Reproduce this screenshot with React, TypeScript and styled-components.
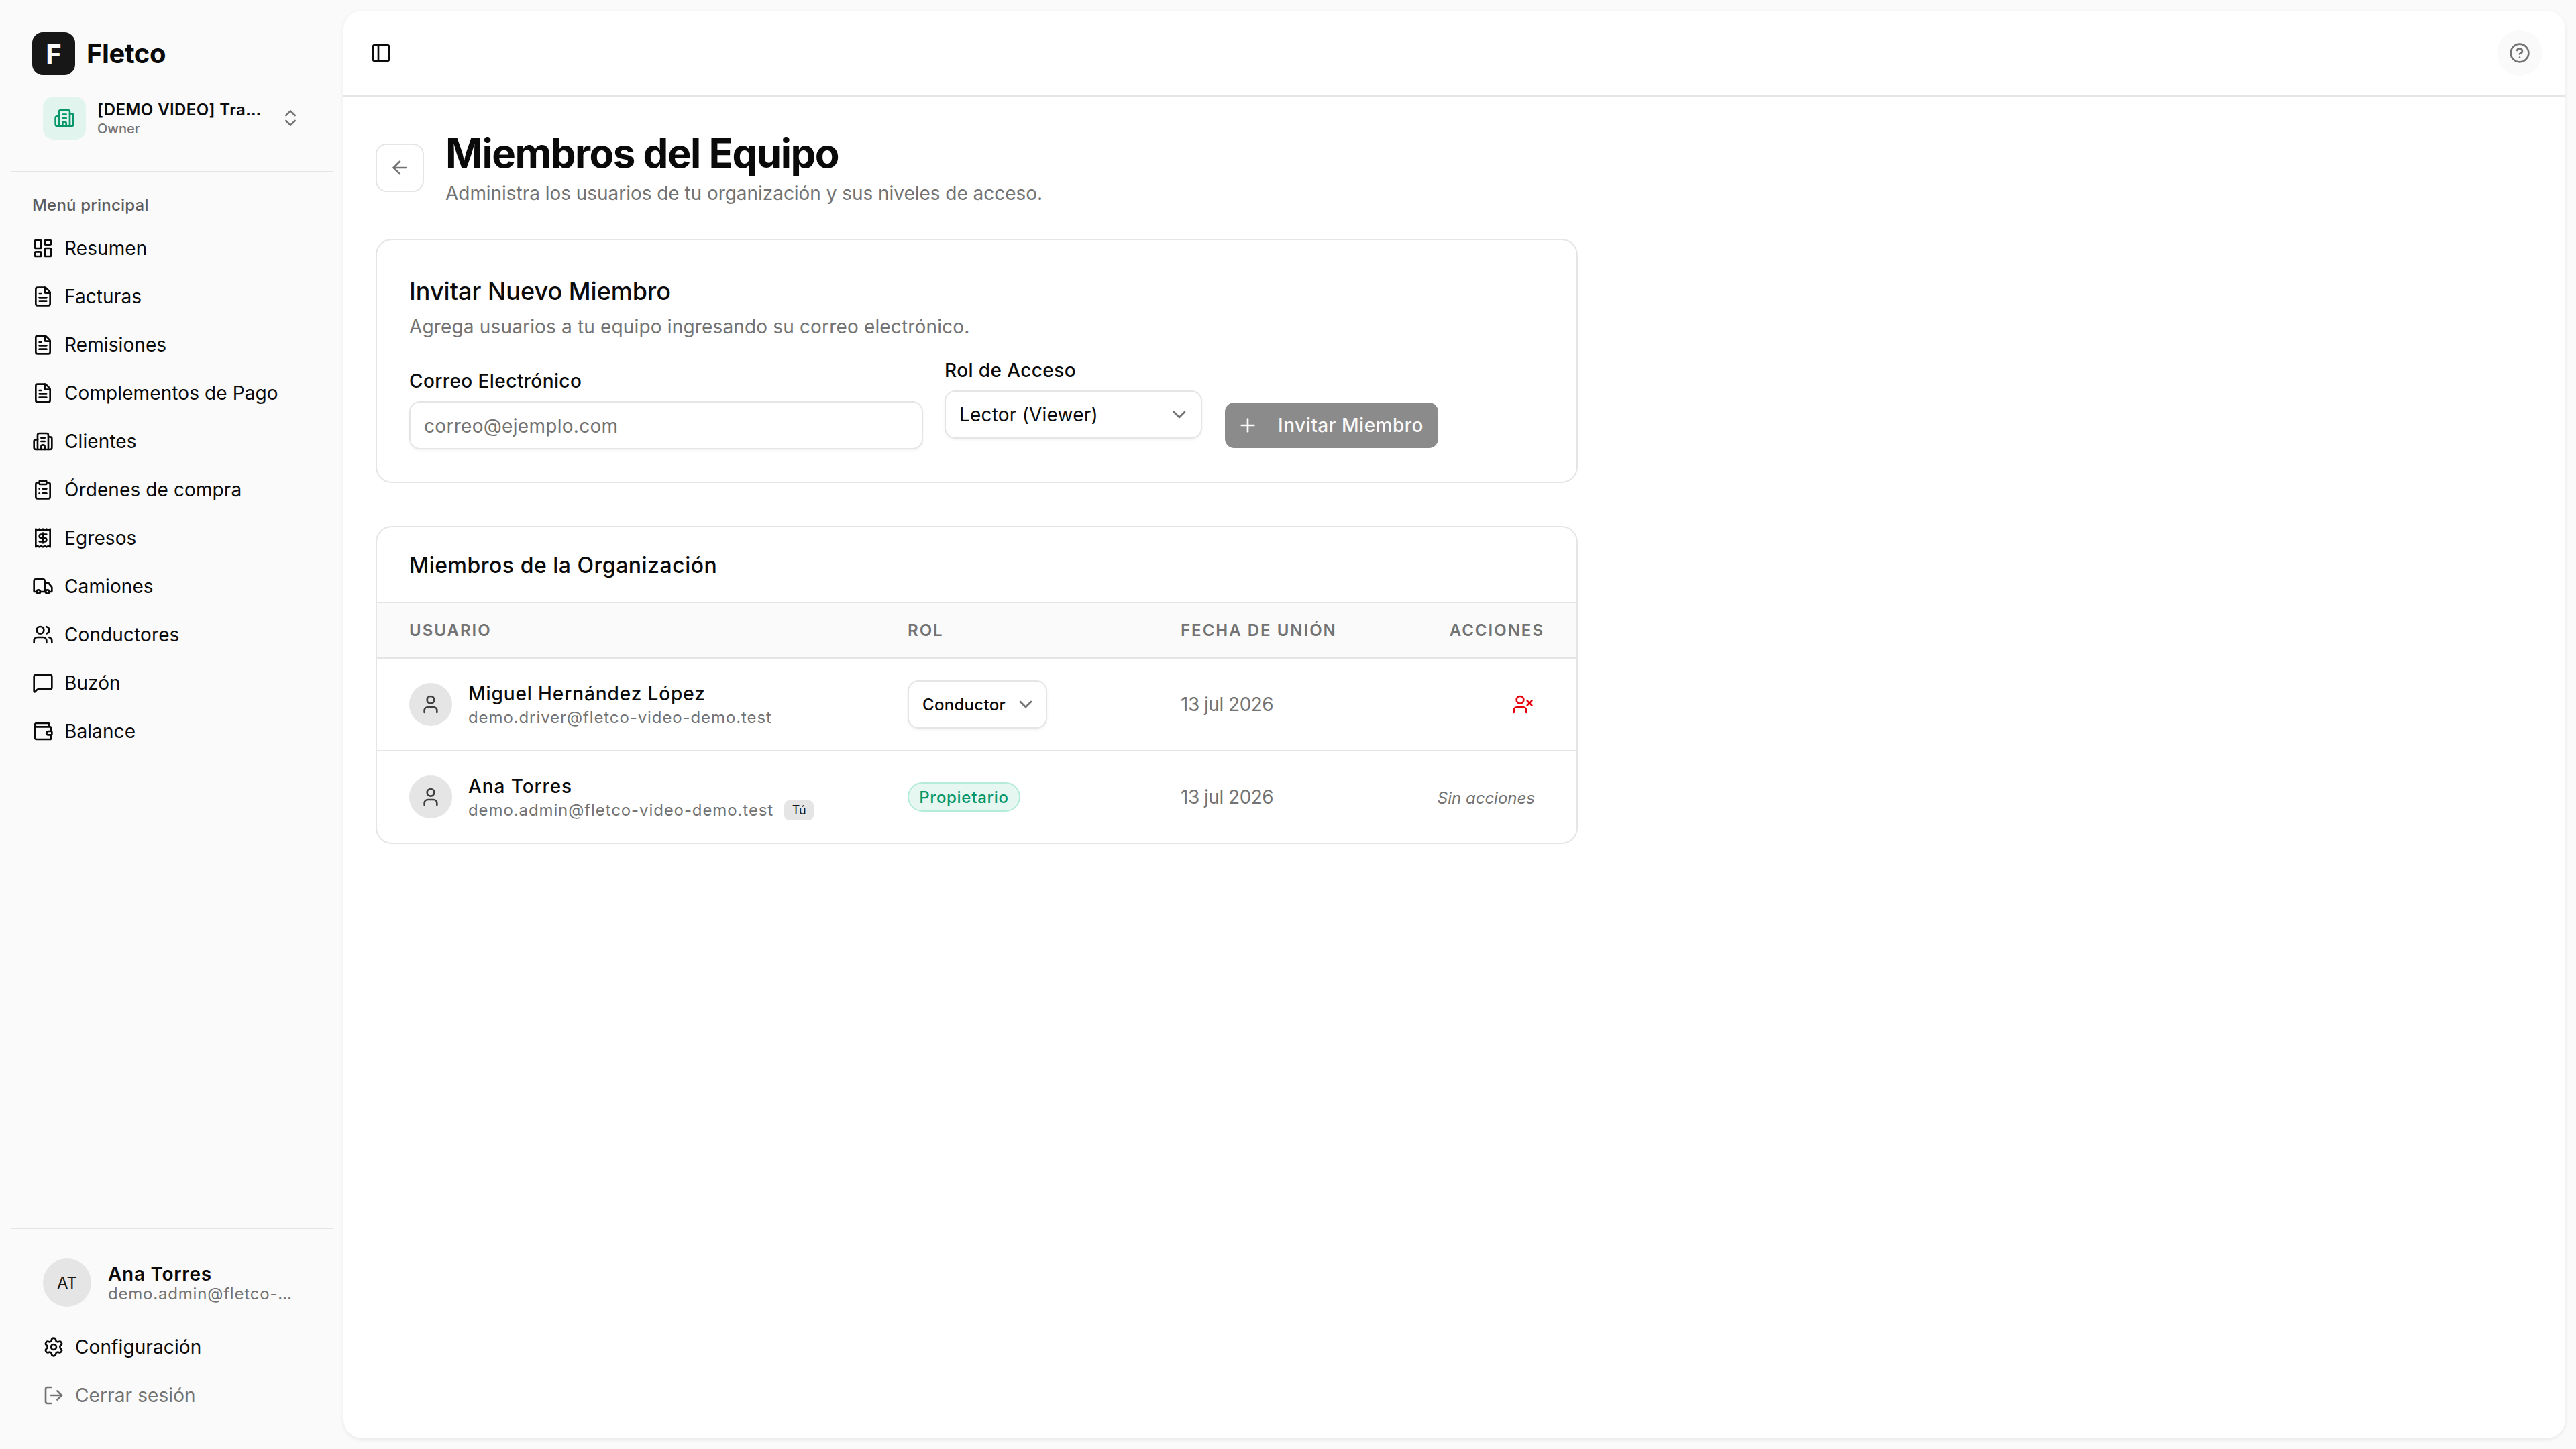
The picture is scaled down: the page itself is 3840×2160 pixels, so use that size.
import React from 'react';
import styled, { createGlobalStyle } from 'styled-components';
import {
  ArrowLeft,
  Building2,
  ChevronDown,
  ChevronsUpDown,
  CircleHelp,
  ClipboardList,
  FileText,
  LayoutDashboard,
  LogOut,
  MessageSquare,
  PanelLeft,
  Plus,
  Receipt,
  Settings,
  Truck,
  User,
  UserX,
  Users,
  Wallet,
} from 'lucide-react';

const GlobalStyle = createGlobalStyle`
  * {
    box-sizing: border-box;
  }
  html,
  body {
    margin: 0;
    height: 100%;
  }
  body {
    font-family: Inter, 'Liberation Sans', sans-serif;
    color: #0a0a0a;
    background: #fafafa;
  }
  svg {
    flex-shrink: 0;
  }
`;

const Shell = styled.div`
  display: flex;
  width: 3840px;
  height: 2160px;
  background: #fafafa;
`;

const Sidebar = styled.aside`
  width: 512px;
  flex-shrink: 0;
  display: flex;
  flex-direction: column;
`;

const Brand = styled.div`
  display: flex;
  align-items: center;
  gap: 17px;
  margin: 48px 0 0 48px;
`;

const BrandMark = styled.div`
  width: 64px;
  height: 64px;
  border-radius: 16px;
  background: #171717;
  color: #fafafa;
  display: flex;
  align-items: center;
  justify-content: center;
  font-size: 40px;
  font-weight: 700;
`;

const BrandName = styled.span`
  font-size: 40px;
  line-height: 56px;
  font-weight: 700;
  letter-spacing: -0.4px;
`;

const OrgSwitcher = styled.div`
  display: flex;
  align-items: center;
  margin: 32px 0 0 64px;
  height: 64px;
`;

const OrgIcon = styled.div`
  width: 64px;
  height: 64px;
  border-radius: 16px;
  background: #e1f5ee;
  color: #059669;
  display: flex;
  align-items: center;
  justify-content: center;
`;

const OrgText = styled.div`
  width: 246px;
  margin: 0 26px 0 17px;
  min-width: 0;
`;

const OrgName = styled.div`
  font-size: 24px;
  line-height: 32px;
  font-weight: 600;
  letter-spacing: 0.4px;
  white-space: nowrap;
  overflow: hidden;
  text-overflow: ellipsis;
`;

const OrgRole = styled.div`
  font-size: 20px;
  line-height: 24px;
  font-weight: 500;
  color: #737373;
`;

const OrgChevron = styled(ChevronsUpDown)`
  color: #737373;
`;

const Divider = styled.div<{ $top: number }>`
  height: 2px;
  margin: ${(p) => p.$top}px 16px 0;
  background: #e5e5e5;
`;

const NavGroup = styled.nav`
  padding: 33px 32px 0;
  display: flex;
  flex-direction: column;
`;

const NavLabel = styled.div`
  font-size: 24px;
  line-height: 32px;
  font-weight: 500;
  letter-spacing: 0.2px;
  color: #5c5c5c;
  padding-left: 16px;
  margin-bottom: 16px;
`;

const NavList = styled.ul`
  list-style: none;
  margin: 0;
  padding: 0;
  display: flex;
  flex-direction: column;
  gap: 8px;
`;

const NavItem = styled.li<{ $muted?: boolean }>`
  height: 64px;
  padding: 0 16px;
  display: flex;
  align-items: center;
  gap: 16px;
  font-size: 28px;
  letter-spacing: 0.1px;
  color: ${(p) => (p.$muted ? '#737373' : '#0a0a0a')};
`;

const SidebarFooter = styled.div`
  margin-top: auto;
`;

const UserBlock = styled.div`
  padding: 44px 48px 48px;
  display: flex;
  flex-direction: column;
  gap: 8px;
`;

const UserRow = styled.div`
  display: flex;
  align-items: center;
  gap: 25px;
  padding-left: 16px;
  margin-bottom: 20px;
`;

const UserInitials = styled.div`
  width: 72px;
  height: 72px;
  border-radius: 50%;
  background: #e5e5e5;
  color: #171717;
  display: flex;
  align-items: center;
  justify-content: center;
  font-size: 24px;
`;

const UserText = styled.div`
  width: 284px;
`;

const UserName = styled.div`
  font-size: 28px;
  line-height: 34px;
  font-weight: 600;
  letter-spacing: 0.7px;
`;

const UserEmail = styled.div`
  font-size: 24px;
  line-height: 26px;
  letter-spacing: 0.8px;
  color: #737373;
  white-space: nowrap;
  overflow: hidden;
  text-overflow: ellipsis;
`;

const Main = styled.main`
  flex: 1;
  margin: 16px 16px 16px 0;
  background: #fff;
  border-radius: 28px;
  box-shadow: 0 2px 6px rgba(0, 0, 0, 0.08);
  display: flex;
  flex-direction: column;
  min-width: 0;
`;

const TopBar = styled.header`
  height: 128px;
  flex-shrink: 0;
  border-bottom: 2px solid #e5e5e5;
  padding: 0 34px 0 40px;
  display: flex;
  align-items: center;
  justify-content: space-between;
`;

const HelpButton = styled.button`
  width: 68px;
  height: 68px;
  padding: 0;
  border: none;
  border-radius: 50%;
  background: #fafafa;
  color: #737373;
  display: flex;
  align-items: center;
  justify-content: center;
`;

const Content = styled.div`
  padding: 48px;
  display: flex;
  flex-direction: column;
`;

const PageHead = styled.div`
  display: flex;
  align-items: center;
  gap: 32px;
  margin-bottom: 48px;
`;

const BackButton = styled.button`
  width: 72px;
  height: 72px;
  padding: 0;
  background: #fff;
  border: 2px solid #e5e5e5;
  border-radius: 16px;
  color: #737373;
  display: flex;
  align-items: center;
  justify-content: center;
`;

const PageTitle = styled.h1`
  margin: 0;
  font-size: 60px;
  line-height: 72px;
  font-weight: 700;
  letter-spacing: -1.5px;
`;

const PageSubtitle = styled.p`
  margin: 4px 0 0;
  font-size: 28px;
  line-height: 40px;
  letter-spacing: -0.04px;
  color: #737373;
`;

const Card = styled.section`
  width: 1792px;
  background: #fff;
  border: 2px solid #e5e5e5;
  border-radius: 24px;
`;

const InviteCard = styled(Card)`
  padding: 48px;
  margin-bottom: 64px;
`;

const CardTitle = styled.h2`
  margin: 0;
  font-size: 36px;
  line-height: 56px;
  font-weight: 450;
`;

const CardDescription = styled.p`
  margin: 5px 0 0;
  font-size: 28px;
  line-height: 40px;
  letter-spacing: 0.16px;
  color: #737373;
`;

const InviteForm = styled.div`
  display: flex;
  align-items: flex-end;
  gap: 32px;
  margin-top: 25px;
`;

const Field = styled.div<{ $width: number; $lift?: number }>`
  width: ${(p) => p.$width}px;
  margin-bottom: ${(p) => p.$lift ?? 0}px;
  display: flex;
  flex-direction: column;
  gap: 10px;
`;

const FieldLabel = styled.label`
  font-size: 28px;
  line-height: 40px;
  font-weight: 450;
  letter-spacing: 0.4px;
`;

const TextInput = styled.input`
  height: 72px;
  width: 100%;
  padding: 2px 20px 0;
  border: 2px solid #e5e5e5;
  border-radius: 16px;
  background: #fff;
  box-shadow: 0 2px 4px rgba(0, 0, 0, 0.05);
  font: inherit;
  font-size: 28px;
  letter-spacing: 0.3px;
  outline: none;
  &::placeholder {
    color: #737373;
    opacity: 1;
  }
`;

const SelectBox = styled.div`
  height: 72px;
  padding: 0 20px;
  border: 2px solid #e5e5e5;
  border-radius: 16px;
  background: #fff;
  box-shadow: 0 2px 4px rgba(0, 0, 0, 0.05);
  display: flex;
  align-items: center;
  justify-content: space-between;
  font-size: 28px;
  letter-spacing: 0.2px;
  svg {
    color: #737373;
    margin-right: -4px;
  }
`;

const InviteButton = styled.button`
  width: 318px;
  height: 68px;
  margin: 0 0 2px 2px;
  padding: 0 18px;
  border: none;
  border-radius: 14px;
  background: #8b8b8b;
  color: #fafafa;
  font: inherit;
  font-size: 28px;
  font-weight: 500;
  letter-spacing: 0.5px;
  display: flex;
  align-items: center;
  gap: 29px;
`;

const CardHead = styled.div`
  height: 113px;
  padding: 37px 48px 0;
  border-bottom: 2px solid #e5e5e5;
`;

const MembersTitle = styled.h2`
  margin: 0;
  font-size: 32px;
  line-height: 40px;
  font-weight: 550;
  letter-spacing: 0.5px;
`;

const tableColumns = '743px 407px 1fr auto';

const TableHead = styled.div`
  height: 83px;
  padding: 0 48px;
  display: grid;
  grid-template-columns: ${tableColumns};
  align-items: center;
  background: #fafafa;
  border-bottom: 2px solid #e5e5e5;
  font-size: 24px;
  font-weight: 600;
  letter-spacing: 2px;
  color: #737373;
  text-transform: uppercase;
`;

const TableRow = styled.div`
  height: 138px;
  padding: 0 48px;
  display: grid;
  grid-template-columns: ${tableColumns};
  align-items: center;
  border-bottom: 2px solid #e5e5e5;
  &:last-child {
    border-bottom: none;
    height: 136px;
    border-radius: 0 0 22px 22px;
  }
`;

const Member = styled.div`
  display: flex;
  align-items: center;
  gap: 24px;
`;

const MemberAvatar = styled.div`
  width: 64px;
  height: 64px;
  border-radius: 50%;
  background: #e5e5e5;
  display: flex;
  align-items: center;
  justify-content: center;
  color: #404040;
`;

const MemberName = styled.div`
  font-size: 28px;
  line-height: 40px;
  font-weight: 450;
  letter-spacing: 0.9px;
`;

const MemberEmail = styled.div`
  font-size: 24px;
  line-height: 32px;
  letter-spacing: 0.9px;
  color: #737373;
  display: flex;
  align-items: center;
  gap: 16px;
`;

const YouTag = styled.span`
  width: 44px;
  height: 30px;
  border-radius: 8px;
  background: #e5e5e5;
  color: #171717;
  font-size: 18px;
  line-height: 30px;
  letter-spacing: 0;
  text-align: center;
`;

const RoleSelect = styled.div`
  width: 208px;
  height: 72px;
  padding: 0 20px;
  border: 2px solid #e5e5e5;
  border-radius: 16px;
  background: #fff;
  box-shadow: 0 2px 4px rgba(0, 0, 0, 0.05);
  display: flex;
  align-items: center;
  justify-content: space-between;
  font-size: 24px;
  font-weight: 450;
  letter-spacing: 0.3px;
  svg {
    color: #737373;
    margin-right: -6px;
  }
`;

const RoleBadge = styled.span`
  display: inline-flex;
  align-items: center;
  justify-content: center;
  width: 168px;
  height: 44px;
  border: 2px solid #b5ecd7;
  border-radius: 22px;
  background: #e6f7f1;
  color: #059669;
  font-size: 24px;
  font-weight: 500;
  letter-spacing: 0.7px;
`;

const JoinDate = styled.div`
  font-size: 28px;
  letter-spacing: -0.5px;
  color: #737373;
`;

const RemoveCell = styled.div`
  width: 64px;
  justify-self: end;
  display: flex;
  justify-content: center;
  color: #e7000b;
`;

const NoActions = styled.div`
  justify-self: end;
  padding: 2px 14px 0 0;
  font-size: 24px;
  font-style: italic;
  color: #737373;
`;

const navItems = [
  { label: 'Resumen', icon: LayoutDashboard },
  { label: 'Facturas', icon: FileText },
  { label: 'Remisiones', icon: FileText },
  { label: 'Complementos de Pago', icon: FileText },
  { label: 'Clientes', icon: Building2 },
  { label: 'Órdenes de compra', icon: ClipboardList },
  { label: 'Egresos', icon: Receipt },
  { label: 'Camiones', icon: Truck },
  { label: 'Conductores', icon: Users },
  { label: 'Buzón', icon: MessageSquare },
  { label: 'Balance', icon: Wallet },
];

const App: React.FC = () => {
  return (
    <>
      <GlobalStyle />
      <Shell>
        <Sidebar>
          <Brand>
            <BrandMark>F</BrandMark>
            <BrandName>Fletco</BrandName>
          </Brand>
          <OrgSwitcher>
            <OrgIcon>
              <Building2 size={32} />
            </OrgIcon>
            <OrgText>
              <OrgName>[DEMO VIDEO] Transportes Fletco</OrgName>
              <OrgRole>Owner</OrgRole>
            </OrgText>
            <OrgChevron size={32} />
          </OrgSwitcher>
          <Divider $top={47} />
          <NavGroup>
            <NavLabel>Menú principal</NavLabel>
            <NavList>
              {navItems.map((item) => (
                <NavItem key={item.label}>
                  <item.icon size={32} />
                  {item.label}
                </NavItem>
              ))}
            </NavList>
          </NavGroup>
          <SidebarFooter>
            <Divider $top={0} />
            <UserBlock>
              <UserRow>
                <UserInitials>AT</UserInitials>
                <UserText>
                  <UserName>Ana Torres</UserName>
                  <UserEmail>demo.admin@fletco-video-demo.test</UserEmail>
                </UserText>
              </UserRow>
              <NavItem>
                <Settings size={32} />
                Configuración
              </NavItem>
              <NavItem $muted>
                <LogOut size={32} />
                Cerrar sesión
              </NavItem>
            </UserBlock>
          </SidebarFooter>
        </Sidebar>
        <Main>
          <TopBar>
            <PanelLeft size={32} />
            <HelpButton>
              <CircleHelp size={32} />
            </HelpButton>
          </TopBar>
          <Content>
            <PageHead>
              <BackButton>
                <ArrowLeft size={32} />
              </BackButton>
              <div>
                <PageTitle>Miembros del Equipo</PageTitle>
                <PageSubtitle>
                  Administra los usuarios de tu organización y sus niveles de
                  acceso.
                </PageSubtitle>
              </div>
            </PageHead>
            <InviteCard>
              <CardTitle>Invitar Nuevo Miembro</CardTitle>
              <CardDescription>
                Agrega usuarios a tu equipo ingresando su correo electrónico.
              </CardDescription>
              <InviteForm>
                <Field $width={766}>
                  <FieldLabel>Correo Electrónico</FieldLabel>
                  <TextInput placeholder="correo@ejemplo.com" />
                </Field>
                <Field $width={384} $lift={16}>
                  <FieldLabel>Rol de Acceso</FieldLabel>
                  <SelectBox>
                    Lector (Viewer)
                    <ChevronDown size={32} />
                  </SelectBox>
                </Field>
                <InviteButton>
                  <Plus size={32} />
                  Invitar Miembro
                </InviteButton>
              </InviteForm>
            </InviteCard>
            <Card>
              <CardHead>
                <MembersTitle>Miembros de la Organización</MembersTitle>
              </CardHead>
              <TableHead>
                <span>Usuario</span>
                <span>Rol</span>
                <span>Fecha de Unión</span>
                <span>Acciones</span>
              </TableHead>
              <TableRow>
                <Member>
                  <MemberAvatar>
                    <User size={32} />
                  </MemberAvatar>
                  <div>
                    <MemberName>Miguel Hernández López</MemberName>
                    <MemberEmail>demo.driver@fletco-video-demo.test</MemberEmail>
                  </div>
                </Member>
                <RoleSelect>
                  Conductor
                  <ChevronDown size={32} />
                </RoleSelect>
                <JoinDate>13 jul 2026</JoinDate>
                <RemoveCell>
                  <UserX size={32} />
                </RemoveCell>
              </TableRow>
              <TableRow>
                <Member>
                  <MemberAvatar>
                    <User size={32} />
                  </MemberAvatar>
                  <div>
                    <MemberName>Ana Torres</MemberName>
                    <MemberEmail>
                      demo.admin@fletco-video-demo.test
                      <YouTag>Tú</YouTag>
                    </MemberEmail>
                  </div>
                </Member>
                <div>
                  <RoleBadge>Propietario</RoleBadge>
                </div>
                <JoinDate>13 jul 2026</JoinDate>
                <NoActions>Sin acciones</NoActions>
              </TableRow>
            </Card>
          </Content>
        </Main>
      </Shell>
    </>
  );
};

export default App;
